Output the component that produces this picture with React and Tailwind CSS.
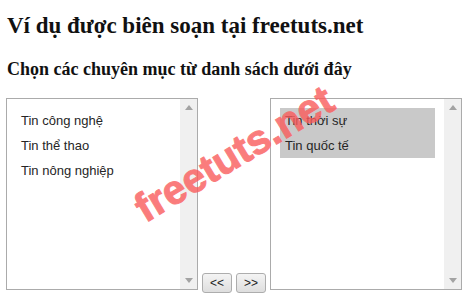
import React from 'react';

const left = ['Tin công nghệ', 'Tin thể thao', 'Tin nông nghiệp'];
const right = ['Tin thời sự', 'Tin quốc tế'];

// Thanh cuộn giả của listbox
function Scrollbar() {
  return (
    <div className="w-[17px] bg-[#f0f0f0] flex flex-col items-center justify-between py-[6px]">
      <svg width="8" height="5" viewBox="0 0 8 5">
        <path d="M0 5 L4 0 L8 5 Z" fill="#a3a3a3" />
      </svg>
      <svg width="8" height="5" viewBox="0 0 8 5">
        <path d="M0 0 L4 5 L8 0 Z" fill="#a3a3a3" />
      </svg>
    </div>
  );
}

function ListBox({ items, selected }) {
  return (
    <div className="w-[192px] h-[192px] border border-[#ababab] bg-white flex">
      <div className="flex-1 p-[9px]">
        {items.map((t) => (
          <div
            key={t}
            className={`h-[25px] leading-[25px] pl-[5px] text-[13px] text-[#262626] ${selected ? 'bg-[#c9c9c9]' : ''}`}
          >
            {t}
          </div>
        ))}
      </div>
      <Scrollbar />
    </div>
  );
}

function Btn({ children }) {
  return (
    <button className="w-[30px] h-[20px] rounded-[3px] border border-[#adadad] bg-gradient-to-b from-[#f4f4f4] to-[#dedede] text-[12px] leading-none text-[#222]">
      {children}
    </button>
  );
}

export default function App() {
  return (
    <div className="relative w-[474px] h-[305px] bg-white overflow-hidden font-['Liberation_Sans',Arial,sans-serif]">
      <div className="pl-[7px] pt-[12px]">
        <h2 className="font-['Liberation_Serif','Times_New_Roman',serif] font-bold text-[23px] leading-[28px] text-[#111]">
          Ví dụ được biên soạn tại freetuts.net
        </h2>
        <h3 className="mt-[18px] font-['Liberation_Serif','Times_New_Roman',serif] font-bold text-[18px] leading-[22px] text-[#111]">
          Chọn các chuyên mục từ danh sách dưới đây
        </h3>
      </div>

      <div className="flex items-end gap-[4px] pl-[6px] mt-[18px]">
        <ListBox items={left} />
        <div className="flex gap-[4px] mb-[-3px]">
          <Btn>&lt;&lt;</Btn>
          <Btn>&gt;&gt;</Btn>
        </div>
        <ListBox items={right} selected />
      </div>

      {/* watermark */}
      <span className="absolute left-[146px] top-[189px] origin-[0_35px] -rotate-[31deg] font-['Liberation_Sans',Arial,sans-serif] font-bold text-[41px] leading-none text-[#fa5c5c] [-webkit-text-stroke:1px_#fa5c5c] opacity-80 whitespace-nowrap pointer-events-none">
        freetuts.net
      </span>
    </div>
  );
}
